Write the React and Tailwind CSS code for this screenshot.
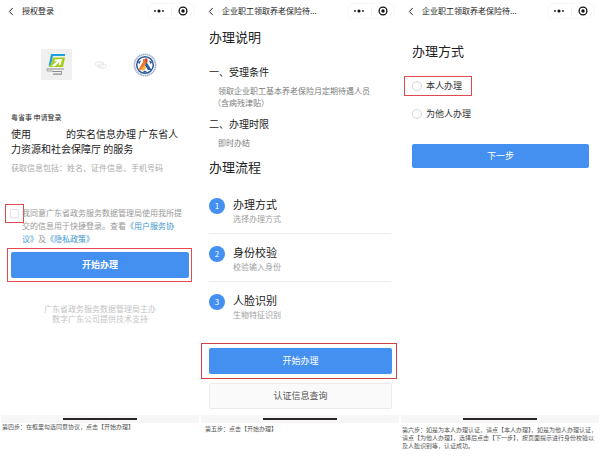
import React, { useState } from 'react';

const STEPS = [
  { id: 1, title: '办理方式', desc: '选择办理方式' },
  { id: 2, title: '身份校验', desc: '校验输入身份' },
  { id: 3, title: '人脸识别', desc: '生物特征识别' }
];

const METHODS = [
  { value: 'self', label: '本人办理', marked: true },
  { value: 'other', label: '为他人办理', marked: false }
];

function TitleBar({ title }) {
  return (
    <header className="flex h-[22px] items-center pl-2 pr-[5px]">
      <button type="button" aria-label="返回" className="mr-2 flex w-[6px] justify-center">
        <svg viewBox="0 0 6 10" className="h-[9px] w-[6px]" fill="none" stroke="#222" strokeWidth="1.1">
          <path d="M5 1 1.2 5 5 9" />
        </svg>
      </button>
      <h1 className="min-w-0 flex-1 whitespace-nowrap text-[8px] leading-[12px] text-[#222]">{title}</h1>
      <div className="flex h-[16px] w-[48px] shrink-0 items-center rounded-full border border-[#f7f7f7]">
        <button type="button" aria-label="更多" className="flex flex-1 justify-center">
          <svg viewBox="0 0 12 6" className="h-[6px] w-[12px]" fill="#111">
            <circle cx="2" cy="3" r="0.9" />
            <circle cx="6" cy="3" r="1.6" />
            <circle cx="10" cy="3" r="0.9" />
          </svg>
        </button>
        <span className="h-[9px] w-px bg-[#f0f0f0]" />
        <button type="button" aria-label="关闭" className="flex flex-1 justify-center">
          <svg viewBox="0 0 10 10" className="h-[10px] w-[10px]">
            <circle cx="5" cy="5" r="3.9" fill="none" stroke="#111" strokeWidth="1.3" />
            <circle cx="5" cy="5" r="1.7" fill="#111" />
          </svg>
        </button>
      </div>
    </header>
  );
}

function Phone({ title, caption, captionClass, children }) {
  return (
    <section className="flex min-w-0 flex-col">
      <div className="flex min-h-[415px] flex-col">
        <TitleBar title={title} />
        {children}
      </div>
      <div className="mx-px flex h-2 items-center justify-center bg-[#f7f7f7]">
        <span className="h-[2px] w-[37%] bg-[#2b2529]" />
      </div>
      <div className={`whitespace-nowrap text-[6px] leading-[8px] text-[#555] ${captionClass}`}>
        {caption.map(line => (
          <p key={line}>{line}</p>
        ))}
      </div>
    </section>
  );
}

function PrimaryButton({ children, className = '' }) {
  return (
    <button
      type="button"
      className={`block w-full rounded-[2px] bg-[#4390f1] text-[9px] leading-[12px] text-white ${className}`}
    >
      {children}
    </button>
  );
}

function ProvinceLogo() {
  return (
    <svg viewBox="0 0 31 31" className="h-[31px] w-[31px]" aria-hidden="true">
      <rect width="31" height="31" rx="1" fill="#f0f0f0" />
      <path d="M10 5h14v2H12L10 15.500 7.500 17.500Z" fill="#1e9fe0" />
      <path d="M12 8.500h12L22 18H8l2-3Z" fill="#a5cd1c" />
      <path d="m10.500 17 5.500-5-3 .2 1-1.700 7-.5-1.500 6-1.800.3.600-3.300-4.800 4.500Z" fill="#fff" />
      <path d="M6 20h17M11 22.500h10M12 25.200h8.500" fill="none" stroke="#8d8d8d" strokeWidth="1.200" />
      <path d="M6 19.500v2.500h5.500v1M20.500 22.500v3" fill="none" stroke="#a5a5a5" />
    </svg>
  );
}

function BureauLogo() {
  return (
    <svg viewBox="0 0 24 24" className="h-[24px] w-[24px]" aria-hidden="true">
      <circle cx="12" cy="12" r="10.600" fill="#fff" stroke="#9fb0c6" strokeWidth="1.700" strokeDasharray="1.400 .5" />
      <circle cx="12" cy="12" r="8.300" fill="#fff" stroke="#2d5a9e" strokeWidth="1.500" />
      <path d="M4.500 9 8 7.500 6.500 11ZM19.500 9 16 7.500l1.500 3.500ZM9 19.500h6L12 17.500Z" fill="#2d5a9e" />
      <path d="M10 6h3.500l-.5 5-2 2.500L8 17H5.500L8 12l2-3Z" fill="#ee7c30" />
      <path d="m13.500 9 2.500 4 2.500 4H15l-3-4.500Z" fill="#2d5a9e" />
      <path d="M12 5.500h2.500V9L13 10.500Z" fill="#c8402f" />
      <path d="m10 14 1.500-1.500L13 15l-2 2.500H8.500Z" fill="#f4b13e" />
    </svg>
  );
}

function LoginScreen() {
  const [agreed, setAgreed] = useState(false);

  return (
    <main className="flex flex-col">
      <div className="mt-[27px] flex items-center justify-center gap-[22px] pr-[3px]">
        <ProvinceLogo />
        <svg viewBox="0 0 14 8" className="h-[8px] w-[14px]" fill="none" stroke="#e4e4e4" aria-hidden="true">
          <rect x="1.500" y="1" width="8" height="4" rx="2" />
          <rect x="4" y="3" width="8" height="4" rx="2" />
        </svg>
        <div className="ml-[3px]">
          <BureauLogo />
        </div>
      </div>

      <div className="mt-[31px] px-[11px]">
        <p className="text-[7px] leading-[12px] text-[#222]">粤省事 申请登录</p>
        <h2 className="mt-[3px] text-[10px] leading-[15px] text-[#1c1c1c]">
          使用<span className="inline-block w-[35px]" />的实名信息办理 广东省人
          <br />
          力资源和社会保障厅 的服务
        </h2>
        <p className="mt-[6px] text-[8px] leading-[12px] text-[#aaa]">
          获取信息包括：姓名、证件信息、手机号码
        </p>
      </div>

      <div className="mt-[30px] flex items-start pl-[5px]">
        <span className="flex h-[19px] w-[19px] shrink-0 items-center justify-center border border-[#dc4a4f]">
          <input
            id="agree"
            type="checkbox"
            checked={agreed}
            onChange={e => setAgreed(e.target.checked)}
            className="h-[9px] w-[9px] appearance-none rounded-[1px] border border-[#e2e2e2] bg-white checked:bg-[#4390f1]"
          />
        </span>
        <label htmlFor="agree" className="-ml-[2px] mt-[2px] whitespace-nowrap text-[8px] leading-[13px] text-[#999]">
          我同意广东省政务服务数据管理局使用我所提
          <br />
          交的信息用于快捷登录。查看
          <a href="#terms" className="text-[#4297cf]">《用户服务协</a>
          <br />
          <a href="#terms" className="text-[#4297cf]">议》</a>及
          <a href="#privacy" className="text-[#4297cf]">《隐私政策》</a>
        </label>
      </div>

      <div className="ml-[7px] mr-2 mt-[3px] border border-[#e5484d] py-[3px] pl-[3px] pr-[2px]">
        <PrimaryButton className="h-[26px] font-bold">开始办理</PrimaryButton>
      </div>

      <footer className="mt-[22px] text-center text-[8px] leading-[10px] text-[#c4c4c4]">
        <p>广东省政务服务数据管理局主办</p>
        <p>数字广东公司提供技术支持</p>
      </footer>
    </main>
  );
}

function GuideScreen() {
  return (
    <main className="flex flex-col">
      <div className="px-[9px]">
        <h2 className="mt-[6px] text-[13px] leading-[18px] text-[#222]">办理说明</h2>
        <h3 className="mt-[19px] text-[10px] leading-[14px] text-[#222]">一、受理条件</h3>
        <div className="mt-[6px] pl-1 text-[8px] leading-[12px] text-[#7c7c7c]">
          <p className="pl-[5px]">领取企业职工基本养老保险月定期待遇人员</p>
          <p>（含病残津贴）</p>
        </div>
        <h3 className="mt-2 text-[10px] leading-[14px] text-[#222]">二、办理时限</h3>
        <p className="mt-[6px] pl-[9px] text-[8px] leading-[12px] text-[#7c7c7c]">即时办结</p>
        <h2 className="mt-[9px] text-[13px] leading-[18px] text-[#222]">办理流程</h2>

        <ol className="mt-[10px] divide-y divide-[#eeeeee]">
          {STEPS.map(step => (
            <li key={step.id} className="flex gap-2 pb-2 pt-[10px]">
              <span className="mt-[2px] flex h-4 w-4 shrink-0 items-center justify-center rounded-full bg-[#4390f1] text-[8px] leading-none text-white">
                {step.id}
              </span>
              <div>
                <h4 className="text-[11px] leading-[16px] text-[#1c1c1c]">{step.title}</h4>
                <p className="text-[8px] leading-[13px] text-[#a0a0a0]">{step.desc}</p>
              </div>
            </li>
          ))}
        </ol>
      </div>

      <div className="ml-px mr-[3px] mt-[14px] border border-[#cf3f44] py-1 pl-[7px] pr-1">
        <PrimaryButton className="h-[26px]">开始办理</PrimaryButton>
      </div>
      <div className="ml-[9px] mr-2 mt-1">
        <button
          type="button"
          className="block h-[26px] w-full rounded-[2px] border border-[#ececec] bg-[#fafafa] text-[9px] leading-[12px] text-[#555]"
        >
          认证信息查询
        </button>
      </div>
    </main>
  );
}

function MethodScreen() {
  const [method, setMethod] = useState('');

  return (
    <main className="flex flex-col">
      <h2 className="mt-5 px-3 text-[13px] leading-[18px] text-[#222]">办理方式</h2>

      <div className="mt-4 flex flex-col items-start gap-2 pl-1">
        {METHODS.map(m => (
          <label
            key={m.value}
            className={`flex h-5 items-center border pl-[7px] pr-[9px] text-[9px] leading-[12px] text-[#333] ${
              m.marked ? 'border-[#dc4a4f]' : 'border-transparent'
            }`}
          >
            <input
              type="radio"
              name="method"
              value={m.value}
              checked={method === m.value}
              onChange={() => setMethod(m.value)}
              className="mr-1 h-[10px] w-[10px] appearance-none rounded-full border border-[#d8d8d8] bg-white checked:border-[#4390f1] checked:bg-[#4390f1]"
            />
            {m.label}
          </label>
        ))}
      </div>

      <div className="ml-3 mr-[11px] mt-5">
        <PrimaryButton className="h-6">下一步</PrimaryButton>
      </div>
    </main>
  );
}

export default function App() {
  return (
    <div
      lang="zh-CN"
      className="grid min-h-screen grid-cols-3 bg-white font-['Noto_Sans_CJK_SC',sans-serif]"
    >
      <Phone
        title="授权登录"
        caption={['第四步：在框里勾选同意协议，点击【开始办理】']}
        captionClass="pl-[2px]"
      >
        <LoginScreen />
      </Phone>
      <Phone
        title="企业职工领取养老保险待..."
        caption={['第五步：点击【开始办理】']}
        captionClass="pl-[5px] pt-[2px]"
      >
        <GuideScreen />
      </Phone>
      <Phone
        title="企业职工领取养老保险待..."
        caption={[
          '第六步：如是为本人办理认证，请点【本人办理】，如是为他人办理认证，',
          '请点【为他人办理】，选择后点击【下一步】，按页面提示进行身份校验以',
          '及人脸识别等，认证成功。'
        ]}
        captionClass="pl-[2px] pt-[3px]"
      >
        <MethodScreen />
      </Phone>
    </div>
  );
}
